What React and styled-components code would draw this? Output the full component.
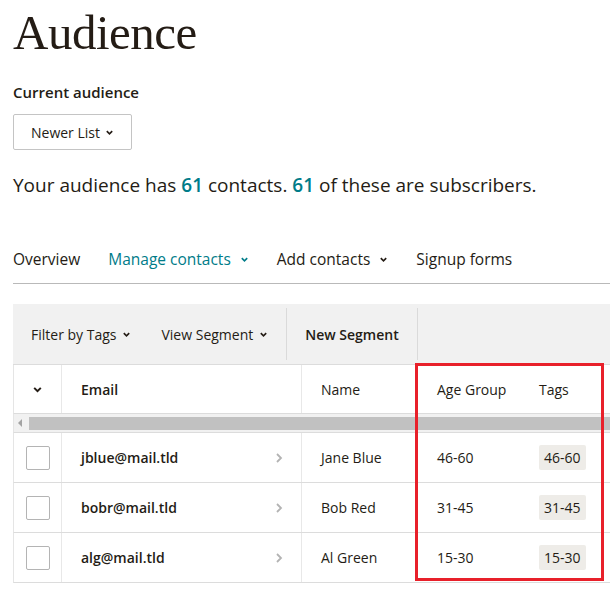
import React from "react";
import styled, { createGlobalStyle } from "styled-components";

const Global = createGlobalStyle`
  body { margin: 0; background: #fff; font-family: "Open Sans", "Liberation Sans", sans-serif; color: #241c15; }
`;

const Page = styled.div`
  padding: 0 0 0 13px;
  overflow: hidden;
`;

const Title = styled.h1`
  font-family: "Liberation Serif", serif;
  font-weight: 400;
  font-size: 49px;
  margin: 0;
  padding-top: 8px;
  line-height: 50px;
  letter-spacing: -0.5px;
`;

const Label = styled.div`
  margin-top: 24px;
  font-size: 15px;
  font-weight: 600;
`;

const Select = styled.button`
  margin-top: 12px;
  width: 119px;
  height: 36px;
  border: 1px solid #c4c4c4;
  border-radius: 2px;
  background: #fff;
  font: inherit;
  font-size: 14px;
  color: #241c15;
  display: flex;
  align-items: center;
  justify-content: center;
  gap: 5px;
`;

const Summary = styled.p`
  font-size: 19px;
  margin: 22px 0 0;
  b { font-weight: 600; color: #007c89; }
`;

const Tabs = styled.div`
  margin-top: 50px;
  display: flex;
  gap: 28px;
  font-size: 15.5px;
  padding-bottom: 13px;
  border-bottom: 1px solid #b9b9b9;
`;

const Tab = styled.span`
  display: flex;
  align-items: center;
  gap: 9px;
  color: ${(p) => (p.active ? "#007c89" : "#241c15")};
`;

const Panel = styled.div`
  margin-top: 20px;
  position: relative;
`;

const Toolbar = styled.div`
  height: 60px;
  background: #f1f1f1;
  display: flex;
  align-items: stretch;
  border-bottom: 1px solid #dcdcdc;
`;

const ToolItem = styled.div`
  display: flex;
  align-items: center;
  gap: 6px;
  font-size: 14px;
  padding: 0 ${(p) => p.pr || 0}px 0 ${(p) => p.pl || 0}px;
  font-weight: ${(p) => (p.bold ? 600 : 400)};
  border-right: ${(p) => (p.divider ? "1px solid #dadada" : "none")};
  margin: 4px 0;
`;

const Row = styled.div`
  display: grid;
  grid-template-columns: 48px 240px 114px 102px 1fr;
  height: ${(p) => p.h}px;
  border-bottom: 1px solid #dcdcdc;
  border-left: 1px solid #e5e5e5;
  font-size: 14px;
`;

const Cell = styled.div`
  display: flex;
  align-items: center;
  padding-left: ${(p) => p.pl ?? 19}px;
  padding-right: ${(p) => p.pr || 0}px;
  border-right: ${(p) => (p.divider ? "1px solid #e8e8e8" : "none")};
  justify-content: ${(p) => p.jc || "flex-start"};
  font-weight: ${(p) => (p.bold ? 600 : 400)};
`;

const Scroll = styled.div`
  height: 18px;
  display: flex;
  align-items: center;
  border-bottom: 1px solid #dcdcdc;
  border-left: 1px solid #e5e5e5;
  background: #f1f1f1;
  gap: 6px;
  padding-left: 4px;
`;

const Thumb = styled.div`
  flex: 1;
  height: 13px;
  background: #c1c1c1;
`;

const Box = styled.span`
  width: 22px;
  height: 22px;
  border: 1px solid #b4b4b4;
  border-radius: 2px;
`;

const Pill = styled.span`
  background: #eeece8;
  padding: 3px 5px;
  border-radius: 2px;
  font-size: 14px;
`;

const Highlight = styled.div`
  position: absolute;
  left: 402px;
  top: 59px;
  width: 183px;
  height: 212px;
  border: 3px solid #e8202a;
  pointer-events: none;
`;

const Caret = ({ c = "currentColor", s = 9 }) => (
  <svg width={s} height={s} viewBox="0 0 10 10">
    <path d="M2 3.5 L5 6.5 L8 3.5" fill="none" stroke={c} strokeWidth="1.8" />
  </svg>
);

const Chevron = () => (
  <svg width="8" height="12" viewBox="0 0 8 12">
    <path d="M2 2 L6 6 L2 10" fill="none" stroke="#b3b3b3" strokeWidth="1.8" />
  </svg>
);

const rows = [
  ["jblue@mail.tld", "Jane Blue", "46-60"],
  ["bobr@mail.tld", "Bob Red", "31-45"],
  ["alg@mail.tld", "Al Green", "15-30"],
];

export default function App() {
  return (
    <Page>
      <Global />
      <Title>Audience</Title>
      <Label>Current audience</Label>
      <Select>Newer List <Caret /></Select>
      <Summary>Your audience has <b>61</b> contacts. <b>61</b> of these are subscribers.</Summary>
      <Tabs>
        <Tab>Overview</Tab>
        <Tab active>Manage contacts <Caret /></Tab>
        <Tab>Add contacts <Caret /></Tab>
        <Tab>Signup forms</Tab>
      </Tabs>
      <Panel>
        <Toolbar>
          <ToolItem pl={18} pr={30}>Filter by Tags <Caret /></ToolItem>
          <ToolItem pr={18} divider>View Segment <Caret /></ToolItem>
          <ToolItem pl={18} pr={18} bold divider>New Segment</ToolItem>
        </Toolbar>
        <Row h={48}>
          <Cell pl={0} jc="center" divider><Caret s={11} /></Cell>
          <Cell bold divider>Email</Cell>
          <Cell>Name</Cell>
          <Cell pl={21}>Age Group</Cell>
          <Cell pl={21}>Tags</Cell>
        </Row>
        <Scroll>
          <svg width="5" height="8" viewBox="0 0 5 8"><path d="M4 0 L0 4 L4 8Z" fill="#a3a3a3" /></svg>
          <Thumb />
        </Scroll>
        {rows.map(([email, name, age]) => (
          <Row h={49} key={email}>
            <Cell pl={0} jc="center" divider><Box /></Cell>
            <Cell bold divider pr={18} jc="space-between">{email}<Chevron /></Cell>
            <Cell>{name}</Cell>
            <Cell pl={21}>{age}</Cell>
            <Cell pl={21}><Pill>{age}</Pill></Cell>
          </Row>
        ))}
        <Highlight />
      </Panel>
    </Page>
  );
}
